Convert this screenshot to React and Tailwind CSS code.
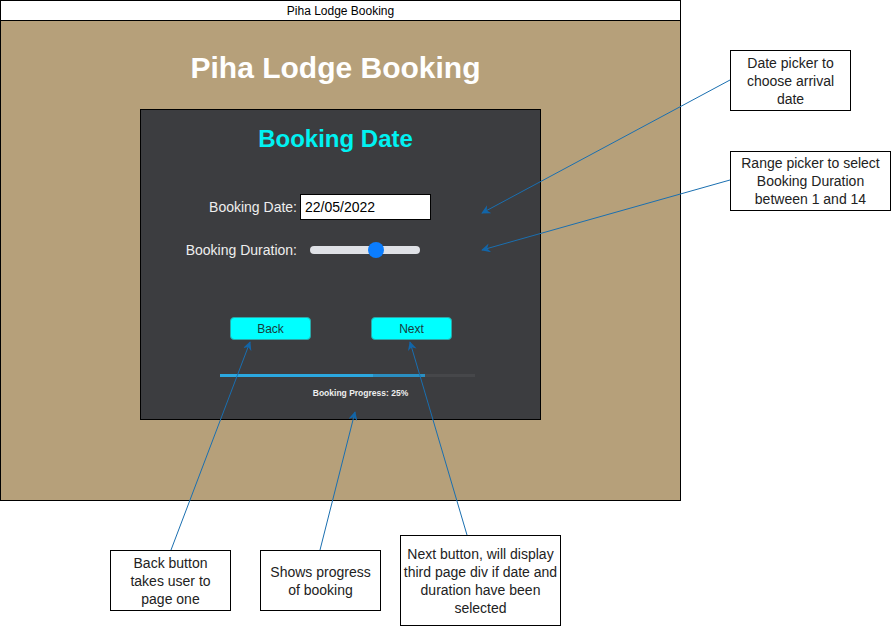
import React from 'react'

const NOTES = [
  { id: 'date', left: 730, top: 50, w: 121, h: 61, pad: 6, text: 'Date picker to choose arrival date' },
  { id: 'range', left: 730, top: 151, w: 161, h: 60, pad: 4, text: 'Range picker to select Booking Duration between 1 and 14' },
  { id: 'back', left: 110, top: 550, w: 121, h: 61, pad: 6, text: 'Back button takes user to page one' },
  { id: 'prog', left: 260, top: 550, w: 121, h: 61, pad: 6, text: 'Shows progress of booking' },
  { id: 'next', left: 400, top: 535, w: 161, h: 91, pad: 0, text: 'Next button, will display third page div if date and duration have been selected' },
]

// arrows: [x1, y1, x2, y2], the head sits on the second point
const ARROWS = [
  [730, 80, 482, 213],
  [730, 180, 482, 250],
  [171, 550, 250, 342],
  [320, 550, 355, 412],
  [467, 535, 410, 342],
]

function Note({ n }) {
  return (
    <div
      className="absolute flex items-center justify-center border border-black bg-white text-center text-[14px] leading-[18px] text-[#222]"
      style={{ left: n.left, top: n.top, width: n.w, height: n.h, paddingLeft: n.pad, paddingRight: n.pad }}
    >
      {n.text}
    </div>
  )
}

export default function App() {
  return (
    <div className="relative h-[626px] w-[891px] overflow-hidden bg-white font-['Liberation_Sans',Arial,sans-serif]">
      {/* wireframe window */}
      <div className="absolute left-0 top-0 flex h-[501px] w-[681px] flex-col border border-black bg-[#b6a07a]">
        <div className="flex h-[20px] shrink-0 items-center justify-center border-b border-black bg-white text-[12px] text-black">
          Piha Lodge Booking
        </div>

        <div className="flex flex-col items-center">
          <h1 className="mt-[29px] mr-[10px] text-[30px] font-bold leading-[35px] text-white">Piha Lodge Booking</h1>

          <div className="mt-[24px] flex h-[311px] w-[401px] flex-col items-center border border-black bg-[#3c3d40]">
            <h2 className="mt-[14px] mr-[10px] text-[24px] font-bold leading-[30px] text-[#00f2f2]">Booking Date</h2>

            <div className="mt-[40px] flex w-full items-center">
              <span className="w-[156px] text-right text-[14px] text-[#eee]">Booking Date:</span>
              <div className="ml-[3px] flex h-[26px] w-[131px] items-center border border-black bg-white px-[4px] text-[14px] text-black">
                22/05/2022
              </div>
            </div>

            <div className="mt-[20px] flex h-[20px] w-full items-center">
              <span className="w-[156px] text-right text-[14px] text-[#eee]">Booking Duration:</span>
              <div className="relative ml-[13px] h-[8px] w-[110px] rounded-full bg-[#dfe1e6]">
                <div className="absolute left-[58px] top-[-4px] h-[16px] w-[16px] rounded-full bg-[#0b7dfe]" />
              </div>
            </div>

            <div className="mt-[57px] flex w-full pl-[89px]">
              <button className="flex h-[23px] w-[81px] items-center justify-center rounded-[4px] border border-[#2aa7a7] bg-[#00ffff] text-[12px] text-[#173c3c]">
                Back
              </button>
              <button className="ml-[60px] flex h-[23px] w-[81px] items-center justify-center rounded-[4px] border border-[#2aa7a7] bg-[#00ffff] text-[12px] text-[#173c3c]">
                Next
              </button>
            </div>

            <div className="mt-[34px] flex h-[3px] w-full pl-[79px]">
              <div className="h-full w-[153px] bg-[#2ba8e0]" />
              <div className="h-full w-[52px] bg-[#2a8fc2]" />
              <div className="h-full w-[50px] bg-[#46474a]" />
            </div>

            <p className="mt-[10px] ml-[40px] text-[8.5px] font-bold leading-[12px] text-[#eee]">Booking Progress: 25%</p>
          </div>
        </div>
      </div>

      {NOTES.map((n) => (
        <Note key={n.id} n={n} />
      ))}

      {/* connector arrows */}
      <svg className="pointer-events-none absolute left-0 top-0" width="891" height="626">
        <defs>
          <marker id="head" viewBox="0 0 10 10" refX="9" refY="5" markerWidth="9" markerHeight="9" orient="auto-start-reverse" markerUnits="userSpaceOnUse">
            <path d="M0 0 L10 5 L0 10 L3 5 Z" fill="#1265a8" />
          </marker>
        </defs>
        {ARROWS.map(([x1, y1, x2, y2], i) => (
          <line key={i} x1={x1} y1={y1} x2={x2} y2={y2} stroke="#1a6fb0" strokeWidth="1" markerEnd="url(#head)" />
        ))}
      </svg>
    </div>
  )
}
